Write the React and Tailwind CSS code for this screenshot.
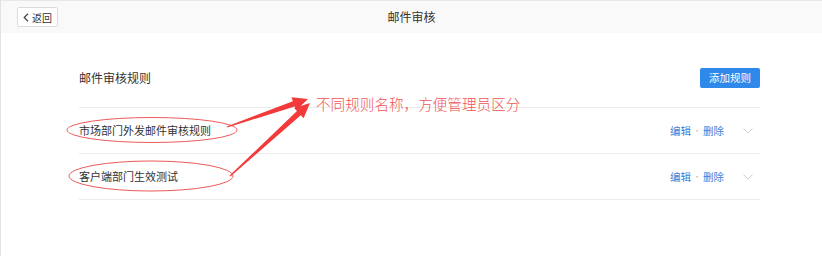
import React from "react";

function arrowPoints(tx, ty, px, py) {
  const dx = px - tx, dy = py - ty;
  const L = Math.hypot(dx, dy);
  const ux = dx / L, uy = dy / L;
  const nx = -uy, ny = ux;
  const bx = px - ux * 15, by = py - uy * 15;
  const pts = [
    [tx + nx * 0.6, ty + ny * 0.6],
    [bx + nx * 2.8, by + ny * 2.8],
    [bx + nx * 7, by + ny * 7],
    [px, py],
    [bx - nx * 7, by - ny * 7],
    [bx - nx * 2.8, by - ny * 2.8],
    [tx - nx * 0.6, ty - ny * 0.6],
  ];
  return pts.map((p) => p[0].toFixed(1) + "," + p[1].toFixed(1)).join(" ");
}

function Row({ name }) {
  return (
    <div className="flex h-[46px] items-center justify-between border-b border-[#ebebeb]">
      <span className="text-[11px] text-[#333]">{name}</span>
      <div className="flex items-center text-[10.5px] text-[#3b7fd8]">
        <span>编辑</span>
        <span className="mx-[2px] text-[8px] text-[#bbb]">·</span>
        <span>删除</span>
        <svg className="ml-[19px] mr-[7px]" width="10" height="6" viewBox="0 0 10 6">
          <path d="M0.5 0.5 L5 5 L9.5 0.5" fill="none" stroke="#cfcfcf" strokeWidth="1" />
        </svg>
      </div>
    </div>
  );
}

export default function App() {
  return (
    <div
      className="relative h-[256px] w-[822px] overflow-hidden border-l border-[#e3e3e3] bg-white"
      style={{ fontFamily: '"Noto Sans CJK SC", "Noto Sans", sans-serif' }}
    >
      <div className="relative flex h-[33px] items-center border-t border-[#e8e8e8] bg-[#f9f9f9]">
        <button className="ml-[16px] flex h-[20px] items-center gap-[3px] rounded-[2px] border border-[#dcdcdc] bg-white pl-[5px] pr-[5px] text-[10px] text-[#333]">
          <svg width="6" height="9" viewBox="0 0 6 9">
            <path d="M5 0.8 L1.2 4.5 L5 8.2" fill="none" stroke="#444" strokeWidth="1.2" />
          </svg>
          <span>返回</span>
        </button>
        <div className="pointer-events-none absolute left-0 right-0 text-center text-[12px] text-[#333]">
          邮件审核
        </div>
      </div>

      <div className="ml-[78px] w-[681px]">
        <div className="flex items-center justify-between border-b border-[#ebebeb] pt-[35px] pb-[19px]">
          <span className="text-[12px] text-[#333]">邮件审核规则</span>
          <button className="h-[20px] w-[60px] rounded-[2px] bg-[#2f89ea] text-[10.5px] text-white">
            添加规则
          </button>
        </div>
        <Row name="市场部门外发邮件审核规则" />
        <Row name="客户端部门生效测试" />
      </div>

      <svg className="pointer-events-none absolute left-0 top-0" width="822" height="256">
        <ellipse cx="151" cy="130" rx="85" ry="12.5" fill="none" stroke="#ee5a5a" strokeWidth="1" />
        <ellipse cx="150" cy="176" rx="82" ry="15" fill="none" stroke="#ee5a5a" strokeWidth="1" />
        <polygon points={arrowPoints(226, 127, 307, 99)} fill="#f23a3a" />
        <polygon points={arrowPoints(229, 176, 309, 103)} fill="#f23a3a" />
      </svg>
      <div className="pointer-events-none absolute left-[315px] top-[94px] text-[14.6px] font-light leading-[20px] text-[#ef5555]">
        不同规则名称，方便管理员区分
      </div>
    </div>
  );
}
